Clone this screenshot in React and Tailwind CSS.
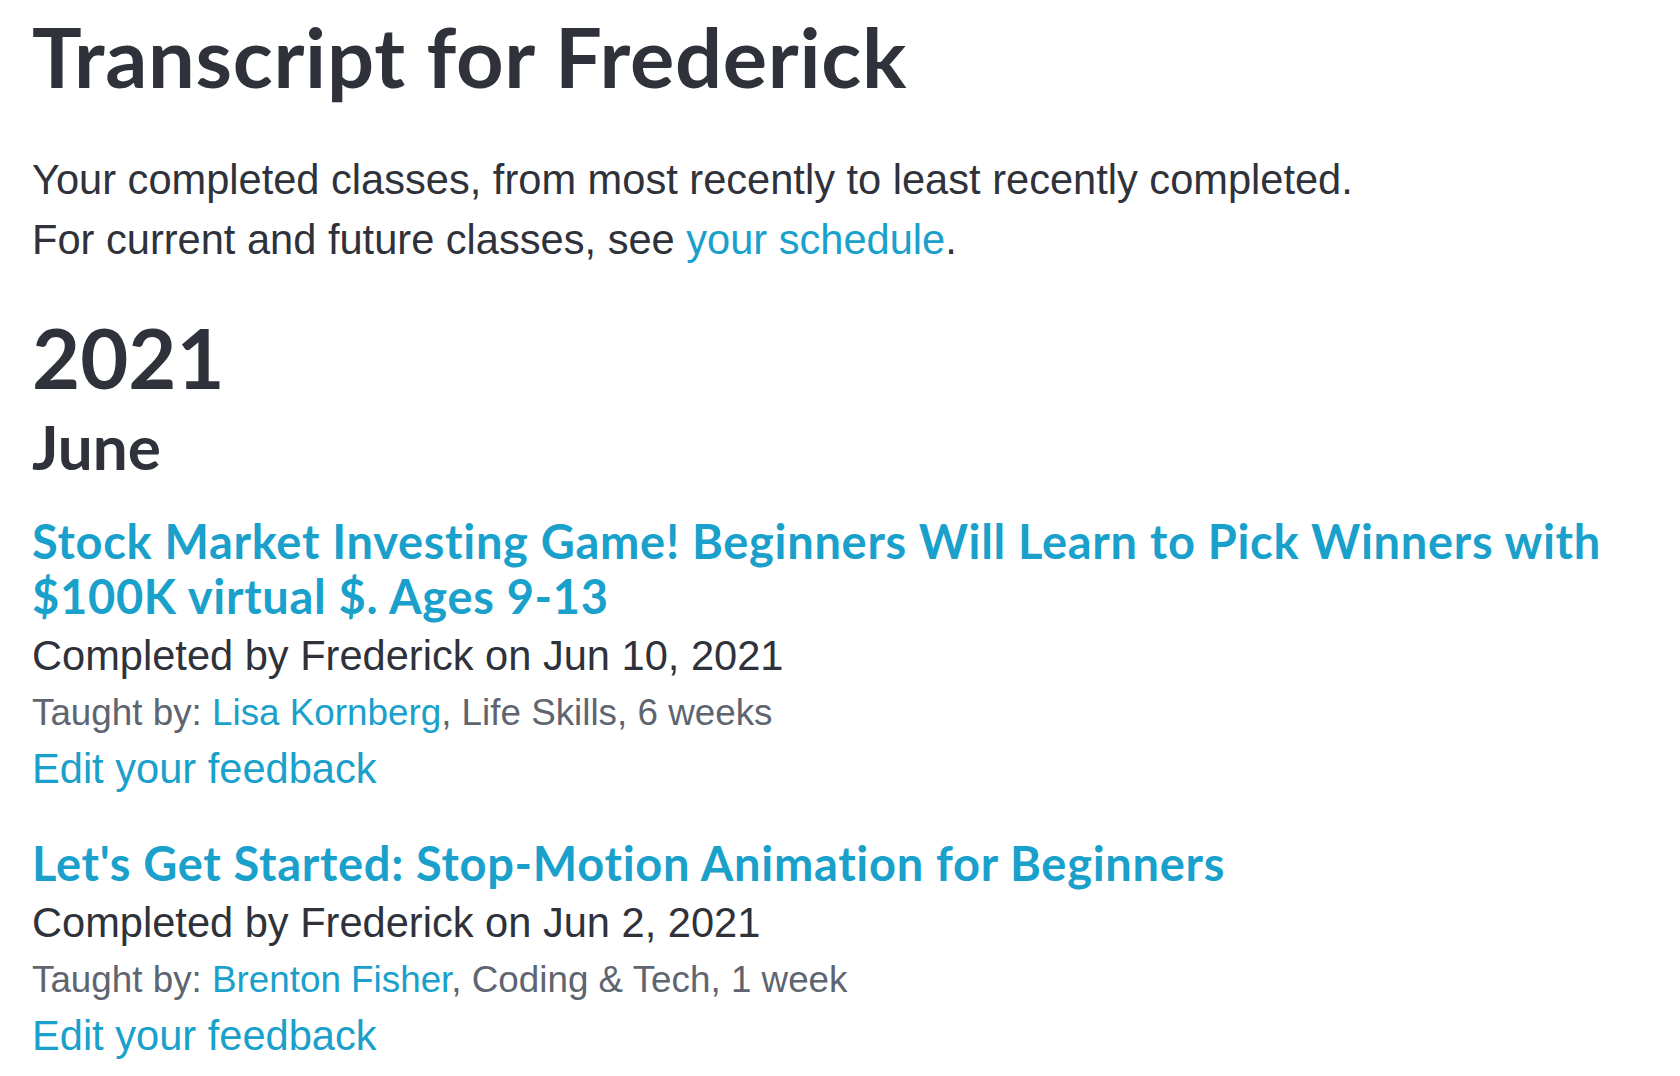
import React from 'react';

const classes = [
  {
    id: 1,
    title: 'Stock Market Investing Game! Beginners Will Learn to Pick Winners with $100K virtual $. Ages 9-13',
    completed: 'Completed by Frederick on Jun 10, 2021',
    teacher: 'Lisa Kornberg',
    details: 'Life Skills, 6 weeks',
  },
  {
    id: 2,
    title: "Let's Get Started: Stop-Motion Animation for Beginners",
    completed: 'Completed by Frederick on Jun 2, 2021',
    teacher: 'Brenton Fisher',
    details: 'Coding & Tech, 1 week',
  },
];

const ClassItem = ({ item, first }) => (
  <div className={first ? 'mt-[31px]' : 'mt-[40px]'}>
    <a
      href="#"
      className="block font-['Lato','Noto_Sans',sans-serif] text-[47px] leading-[55px] font-bold tracking-[0.7px] text-[#19a0cb]"
    >
      {item.title}
    </a>
    <p className="mt-[5px] text-[41.6px] leading-[54px] text-[#2f323a]">{item.completed}</p>
    <p className="mt-[6px] text-[36.8px] leading-[48px] text-[#5e6570]">
      Taught by: <a href="#" className="text-[#19a0cb]">{item.teacher}</a>, {item.details}
    </p>
    <a href="#" className="mt-[5px] block text-[41.6px] leading-[54px] text-[#19a0cb]">
      Edit your feedback
    </a>
  </div>
);

export default function App() {
  return (
    <div className="min-h-screen bg-white px-[32px] pt-[6px] font-['Liberation_Sans',Arial,sans-serif]">
      <h1 className="font-['Lato','Noto_Sans',sans-serif] text-[83px] leading-[100px] font-bold tracking-[0.7px] text-[#2f323a]">
        Transcript for Frederick
      </h1>
      <div className="mt-[44px] text-[41.6px] leading-[60px] text-[#2f323a]">
        <p>Your completed classes, from most recently to least recently completed.</p>
        <p>
          For current and future classes, see <a href="#" className="text-[#19a0cb]">your schedule</a>.
        </p>
      </div>
      <h2 className="mt-[37px] font-['Lato','Noto_Sans',sans-serif] text-[83px] leading-[100px] font-bold text-[#2f323a]">
        2021
      </h2>
      <h3 className="mt-[2px] font-['Lato','Noto_Sans',sans-serif] text-[62px] leading-[74px] font-bold text-[#2f323a]">
        June
      </h3>
      {classes.map((item, i) => (
        <ClassItem key={item.id} item={item} first={i === 0} />
      ))}
    </div>
  );
}
